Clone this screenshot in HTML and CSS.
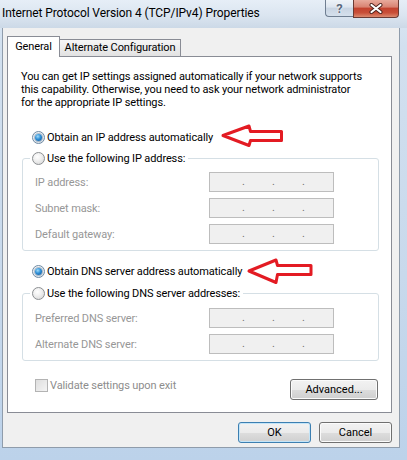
FILE: index.html
```html
<!DOCTYPE html>
<html lang="en">
<head>
<meta charset="utf-8">
<title>Internet Protocol Version 4 (TCP/IPv4) Properties</title>
<link rel="stylesheet" href="styles.css">
</head>
<body>
<div class="window">
  <header class="titlebar">
    <span class="title">Internet Protocol Version 4 (TCP/IPv4) Properties</span>
    <div class="caption-btns">
      <div class="cbtn help">?</div>
      <div class="cbtn close">
        <svg width="14" height="11" viewBox="0 0 14 11"><path d="M2.5 2 L11.5 9 M11.5 2 L2.5 9" stroke="#4a211b" stroke-width="4" stroke-linecap="round"/><path d="M2.5 2 L11.5 9 M11.5 2 L2.5 9" stroke="#ffffff" stroke-width="2.2" stroke-linecap="round"/></svg>
      </div>
    </div>
  </header>
  <div class="client">
    <div class="tabs">
      <div class="tab active">General</div>
      <div class="tab">Alternate Configuration</div>
    </div>
    <div class="panel">
      <p class="desc">You can get IP settings assigned automatically if your network supports<br>this capability. Otherwise, you need to ask your network administrator<br>for the appropriate IP settings.</p>

      <div class="opt opt-ip"><span class="radio on"></span><span>Obtain an IP address automatically</span></div>
      <fieldset class="group group-ip">
        <legend><span class="radio"></span><span>Use the following IP address:</span></legend>
        <div class="row"><span class="lbl">IP address:</span><span class="ip"><span class="dot">.</span><span class="dot">.</span><span class="dot">.</span></span></div>
        <div class="row"><span class="lbl">Subnet mask:</span><span class="ip"><span class="dot">.</span><span class="dot">.</span><span class="dot">.</span></span></div>
        <div class="row"><span class="lbl">Default gateway:</span><span class="ip"><span class="dot">.</span><span class="dot">.</span><span class="dot">.</span></span></div>
      </fieldset>

      <div class="opt opt-dns"><span class="radio on"></span><span>Obtain DNS server address automatically</span></div>
      <fieldset class="group group-dns">
        <legend><span class="radio"></span><span>Use the following DNS server addresses:</span></legend>
        <div class="row"><span class="lbl">Preferred DNS server:</span><span class="ip"><span class="dot">.</span><span class="dot">.</span><span class="dot">.</span></span></div>
        <div class="row"><span class="lbl">Alternate DNS server:</span><span class="ip"><span class="dot">.</span><span class="dot">.</span><span class="dot">.</span></span></div>
      </fieldset>

      <div class="bottom">
        <div class="check"><span class="box"></span><span>Validate settings upon exit</span></div>
        <button class="btn btn-adv">Advanced...</button>
      </div>
    </div>
    <div class="actions">
      <button class="btn btn-ok">OK</button>
      <button class="btn">Cancel</button>
    </div>
  </div>
  <svg class="annot" width="407" height="460" viewBox="0 0 407 460">
    <polygon points="223,135.5 249,126 250.5,131.5 281.5,131.5 281.5,140.5 250.5,140.5 249,145.5" fill="#ffffff" stroke="#e31b23" stroke-width="3" stroke-linejoin="round"/>
    <polygon points="249,271 276,260 277.5,265.5 311,265.5 311,274.5 277.5,274.5 276,282.5" fill="#ffffff" stroke="#e31b23" stroke-width="3" stroke-linejoin="round"/>
  </svg>
</div>
</body>
</html>
```
FILE: styles.css
```css
* { box-sizing: border-box; }
html, body { margin: 0; padding: 0; }
body {
  width: 407px;
  height: 460px;
  overflow: hidden;
  background: #ffffff;
  font-family: Roboto, "Noto Sans", sans-serif;
  font-size: 11px;
  letter-spacing: -0.12px;
  color: #000;
}
.window {
  position: relative;
  width: 407px;
  height: 460px;
  display: flex;
  flex-direction: column;
  background: linear-gradient(180deg, #dde8f4 0%, #d2e0ef 10%, #c8d9ec 60%, #bcd2ea 100%);
}
.titlebar {
  height: 28px;
  flex: none;
  display: flex;
  align-items: flex-start;
  background: linear-gradient(180deg, #e6eef7 0%, #dbe5f0 55%, #ccd9e7 100%);
}
.title {
  flex: 1;
  padding: 5px 0 0 2px;
  font-size: 12px;
  line-height: 16px;
  letter-spacing: -0.1px;
  white-space: nowrap;
}
.caption-btns { display: flex; margin-right: 8px; }
.cbtn { display: flex; align-items: center; justify-content: center; }
.help {
  width: 28px;
  height: 17px;
  border: 1px solid #6f7e91;
  border-top: none;
  border-right: none;
  border-radius: 0 0 0 4px;
  background: linear-gradient(180deg, #eef3f8 0%, #dde5ef 45%, #c8d4e2 50%, #d5e0ec 100%);
  color: #5b6a7e;
  font-weight: bold;
  font-size: 13px;
  line-height: 15px;
  text-shadow: 0 0 2px #fff, 0 0 1px #fff;
}
.close {
  width: 46px;
  height: 18px;
  border: 1px solid #6b3b34;
  border-top: none;
  border-radius: 0 0 4px 0;
  background: linear-gradient(180deg, #e8aa9c 0%, #d98473 40%, #c3432f 50%, #c94f38 75%, #dc8a6f 100%);
}
.client {
  flex: none;
  height: 420px;
  margin: 0 7px 0 2px;
  background: #f0f0f0;
  border: 1px solid #8f9cab;
  border-top: none;
  padding: 8px 7px 4px 4px;
  display: flex;
  flex-direction: column;
}
.tabs {
  height: 20px;
  flex: none;
  display: flex;
  align-items: flex-end;
  position: relative;
  z-index: 1;
}
.tab {
  height: 17px;
  width: 121px;
  border: 1px solid #898c95;
  border-left: none;
  border-bottom: none;
  background: linear-gradient(180deg, #f6f6f6 0%, #ececec 50%, #e2e2e2 100%);
  text-align: center;
  line-height: 15px;
  white-space: nowrap;
}
.tab.active {
  width: 53px;
  height: 21px;
  margin-bottom: -1px;
  border-left: 1px solid #898c95;
  background: #ffffff;
  padding-top: 2px;
}
.panel {
  height: 357px;
  flex: none;
  background: #ffffff;
  border: 1px solid #898c95;
  display: flex;
  flex-direction: column;
}
.desc {
  margin: 13px 0 0 13px;
  line-height: 13px;
  white-space: nowrap;
}
.opt {
  display: flex;
  align-items: center;
  gap: 2px;
  height: 15px;
  margin-left: 24px;
  white-space: nowrap;
}
.opt-ip { margin-top: 21px; }
.opt-dns { margin-top: 13px; }
.radio {
  width: 13px;
  height: 13px;
  flex: none;
  border-radius: 50%;
  border: 1px solid #8c8f92;
  background: radial-gradient(circle at 40% 35%, #ffffff 0%, #f0f0f0 40%, #d2d2d2 100%);
  display: inline-flex;
  align-items: center;
  justify-content: center;
}
.radio.on { border-color: #6f8aa3; background: radial-gradient(circle at 40% 35%, #ffffff 0%, #e9eef2 50%, #c9d4de 100%); }
.radio.on::after {
  content: "";
  width: 7px;
  height: 7px;
  border-radius: 50%;
  background: radial-gradient(circle at 40% 35%, #9fdcfb 0%, #2f8fd6 45%, #0d4f91 100%);
  box-shadow: 0 0 0 1px rgba(40, 80, 120, 0.35);
}
.group {
  margin: 6px 0 0 14px;
  width: 357px;
  min-width: 0;
  padding: 6px 0 6px 0;
  border: 1px solid #d5dfe5;
  border-radius: 3px;
  display: flex;
  flex-direction: column;
  gap: 6px;
}
.group-dns { margin-top: 7px; padding-top: 7px; }
.group legend {
  display: flex;
  align-items: center;
  gap: 2px;
  height: 15px;
  padding: 0 3px 0 2px;
  margin-left: 7px;
  white-space: nowrap;
}
.row {
  display: flex;
  align-items: center;
  height: 20px;
  padding-left: 12px;
}
.lbl { width: 174px; color: #979797; white-space: nowrap; }
.ip {
  width: 125px;
  height: 20px;
  border: 1px solid #bdbdbd;
  background: #f0f0f0;
  display: flex;
  gap: 28px;
  padding-left: 32px;
  line-height: 17px;
  color: #707070;
}
.dot { width: 2px; overflow: visible; }
.bottom {
  display: flex;
  justify-content: space-between;
  align-items: flex-start;
  margin: 18px 13px 0 27px;
}
.check {
  display: flex;
  align-items: center;
  gap: 2px;
  height: 13px;
  color: #8d8d8d;
  white-space: nowrap;
}
.box {
  width: 13px;
  height: 13px;
  border: 1px solid #b3b3b3;
  background: linear-gradient(135deg, #dedede 0%, #f4f4f4 100%);
}
.btn {
  font: inherit;
  height: 21px;
  padding: 0;
  color: #000;
  border: 1px solid #707070;
  border-radius: 3px;
  background: linear-gradient(180deg, #f2f2f2 0%, #ebebeb 50%, #dddddd 51%, #cfcfcf 100%);
  box-shadow: inset 0 0 0 1px #fbfbfb;
}
.btn-adv { width: 88px; }
.actions {
  display: flex;
  justify-content: flex-end;
  gap: 8px;
  margin-top: 9px;
}
.actions .btn { width: 73px; }
.btn-ok {
  border-color: #3c7fb1;
  box-shadow: inset 0 0 0 1px #c4e5f8;
}
.annot {
  position: absolute;
  left: 0;
  top: 0;
  pointer-events: none;
}
```
